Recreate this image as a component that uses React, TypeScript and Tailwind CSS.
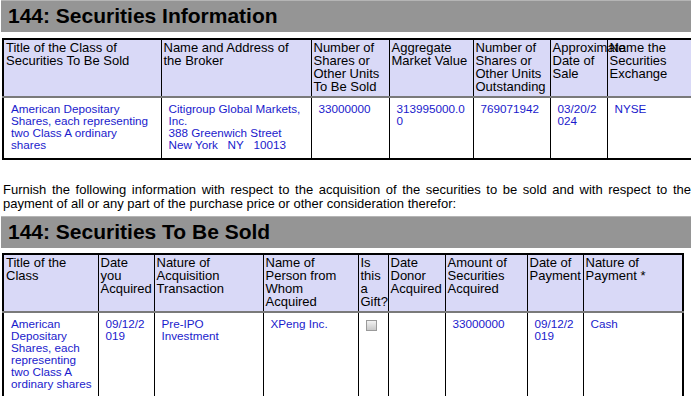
import React from "react";

const th = "border border-black bg-[#d9d9f7] text-left align-top font-normal text-[13px] leading-[13px] pl-[2px] pr-[3px] pt-[1px] pb-[3px] border-b-2 border-b-[#7a7a7a]";
const td = "border border-black align-top text-[11.7px] leading-[12px] text-[#1a1acc] pl-[7px] pt-[5px] pb-[7px] [overflow-wrap:anywhere]";

function Bar({ title }: { title: string }) {
  return (
    <div className="ml-[1px] h-[32px] bg-[#959595] border-t border-t-[#b5b5b5] pl-[7px] text-[21px] font-bold leading-[30px] text-black whitespace-nowrap">
      {title}
    </div>
  );
}

export default function App() {
  return (
    <div className="w-[691px] h-[396px] overflow-hidden bg-white" style={{ fontFamily: '"Liberation Sans", Arial, sans-serif' }}>
      <div className="w-[800px]">
        <Bar title="144: Securities Information" />
        <table className="ml-[2px] mt-[6px] table-fixed border-collapse border-2 border-black w-[704px]">
          <colgroup>
            <col className="w-[158px]" />
            <col className="w-[150px]" />
            <col className="w-[78px]" />
            <col className="w-[84px]" />
            <col className="w-[77px]" />
            <col className="w-[57px]" />
            <col className="w-[100px]" />
          </colgroup>
          <thead>
            <tr>
              <th className={th}>Title of the Class of Securities To Be Sold</th>
              <th className={th}>Name and Address of the Broker</th>
              <th className={th}>Number of Shares or Other Units To Be Sold</th>
              <th className={th}>Aggregate Market Value</th>
              <th className={th}>Number of Shares or Other Units Outstanding</th>
              <th className={th}>Approximate Date of Sale</th>
              <th className={th}>Name the Securities Exchange</th>
            </tr>
          </thead>
          <tbody>
            <tr>
              <td className={`${td} pr-[11px]`}>American Depositary Shares, each representing two Class A ordinary shares</td>
              <td className={`${td} pr-[5px]`}>
                Citigroup Global Markets, Inc.
                <br />
                388 Greenwich Street
                <br />
                <span className="whitespace-pre">New York   NY   10013</span>
              </td>
              <td className={`${td} pr-[5px]`}>33000000</td>
              <td className={`${td} pr-[5px]`}>313995000.00</td>
              <td className={`${td} pr-[5px]`}>769071942</td>
              <td className={`${td} pr-[5px]`}>03/20/2024</td>
              <td className={`${td} pr-[5px]`}>NYSE</td>
            </tr>
          </tbody>
        </table>
      </div>
      <div className="w-[688px] ml-[3px] mt-[23px] text-[13px] leading-[14px] text-black">
        <div className="text-justify [text-align-last:justify]">
          Furnish the following information with respect to the acquisition of the securities to be sold and with respect to the
        </div>
        <div>payment of all or any part of the purchase price or other consideration therefor:</div>
      </div>
      <div className="w-[800px] mt-[5px]">
        <Bar title="144: Securities To Be Sold" />
        <table className="ml-[2px] mt-[5px] table-fixed border-collapse border-2 border-black w-[680px]">
          <colgroup>
            <col className="w-[95px]" />
            <col className="w-[56px]" />
            <col className="w-[109px]" />
            <col className="w-[95px]" />
            <col className="w-[30px]" />
            <col className="w-[57px]" />
            <col className="w-[82px]" />
            <col className="w-[56px]" />
            <col className="w-[100px]" />
          </colgroup>
          <thead>
            <tr>
              <th className={th}>Title of the Class</th>
              <th className={th}>Date you Acquired</th>
              <th className={th}>Nature of Acquisition Transaction</th>
              <th className={th}>Name of Person from Whom Acquired</th>
              <th className={th}>Is this a Gift?</th>
              <th className={th}>Date Donor Acquired</th>
              <th className={th}>Amount of Securities Acquired</th>
              <th className={th}>Date of Payment</th>
              <th className={th}>Nature of Payment *</th>
            </tr>
          </thead>
          <tbody>
            <tr>
              <td className={`${td} pr-[4px]`}>American Depositary Shares, each representing two Class A ordinary shares</td>
              <td className={`${td} pr-[5px]`}>09/12/2019</td>
              <td className={`${td} pr-[5px]`}>Pre-IPO Investment</td>
              <td className={`${td} pr-[5px]`}>XPeng Inc.</td>
              <td className={`${td} pr-[5px]`}>
                <span className="block mt-[2px] w-[11px] h-[11px] border border-[#9a9a9a] bg-gradient-to-b from-[#f2f2f2] to-[#c8c8c8]" />
              </td>
              <td className={`${td} pr-[5px]`}></td>
              <td className={`${td} pr-[5px]`}>33000000</td>
              <td className={`${td} pr-[5px]`}>09/12/2019</td>
              <td className={`${td} pr-[5px]`}>Cash</td>
            </tr>
          </tbody>
        </table>
      </div>
    </div>
  );
}
